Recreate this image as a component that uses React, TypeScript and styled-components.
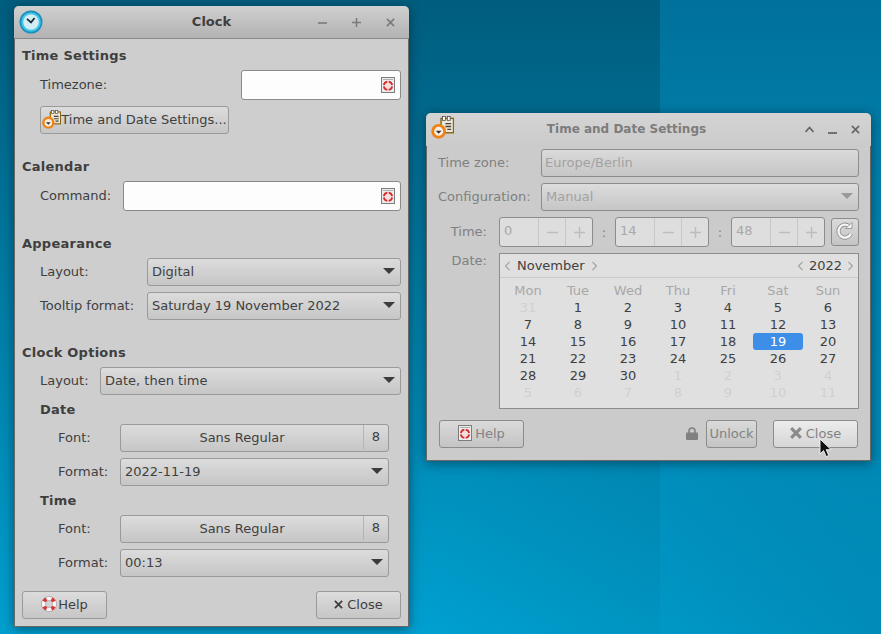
import React from 'react';
import styled, { createGlobalStyle } from 'styled-components';

const GlobalStyle = createGlobalStyle`
  html, body { margin: 0; padding: 0; height: 100%; overflow: hidden; }
  #root { height: 100%; }
  * { box-sizing: border-box; }
`;

const Desktop = styled.div`
  position: relative;
  width: 881px;
  height: 634px;
  overflow: hidden;
  font-family: "DejaVu Sans", sans-serif;
  font-size: 13px;
  color: #3f3f3f;
  background:
    radial-gradient(circle at 100% 100%, rgba(0, 30, 50, 0.18), rgba(0, 30, 50, 0) 450px),
    linear-gradient(180deg, #005d7e 0, #00a0d0 100%) left top / 660px 100% no-repeat,
    linear-gradient(180deg, #00719a 0, #00a4d6 100%) right top / 221px 100% no-repeat;
`;

const Window = styled.div<{ $x: number; $y: number; $w: number; $h: number; $bg?: string }>`
  position: absolute;
  left: ${(p) => p.$x}px;
  top: ${(p) => p.$y}px;
  width: ${(p) => p.$w}px;
  height: ${(p) => p.$h}px;
  background: ${(p) => p.$bg || '#cecece'};
  border-radius: 5px 5px 0 0;
  box-shadow:
    inset 0 0 0 1px rgba(70, 70, 70, 0.75),
    0 2px 12px rgba(0, 20, 35, 0.5);
  display: flex;
  flex-direction: column;
`;

const TitleBar = styled.div<{ $dim?: boolean }>`
  position: relative;
  height: 33px;
  flex: none;
  display: flex;
  align-items: center;
  justify-content: center;
  font-weight: 700;
  font-size: ${(p) => (p.$dim ? 12 : 13)}px;
  padding-bottom: 2px;
  padding-right: ${(p) => (p.$dim ? 44 : 0)}px;
  color: ${(p) => (p.$dim ? '#7c7c7c' : '#3f3f3f')};
  background: ${(p) =>
    p.$dim ? 'linear-gradient(180deg, #d4d4d4, #cbcbcb)' : 'linear-gradient(180deg, #d0d0d0, #b2b2b2)'};
  border-bottom: ${(p) => (p.$dim ? 'none' : '1px solid #8a8a8a')};
  border-radius: 5px 5px 0 0;
`;

const TitleIcon = styled.div<{ $left: number; $top: number }>`
  position: absolute;
  left: ${(p) => p.$left}px;
  top: ${(p) => p.$top}px;
  display: flex;
`;

const TitleButtons = styled.div<{ $dim?: boolean }>`
  position: absolute;
  right: ${(p) => (p.$dim ? 11 : 14)}px;
  top: 0;
  height: 100%;
  display: flex;
  align-items: center;
  gap: ${(p) => (p.$dim ? 14 : 25)}px;
  color: ${(p) => (p.$dim ? '#666' : '#7a7a7a')};
`;

const ClockBody = styled.div`
  flex: 1;
  display: flex;
  flex-direction: column;
  padding: 8px 8px 8px;
`;

const Heading = styled.div<{ $top?: number; $indent?: number }>`
  font-weight: 700;
  height: 16px;
  line-height: 16px;
  padding-top: 1px;
  letter-spacing: 0.25px;
  margin-top: ${(p) => p.$top || 0}px;
  margin-left: ${(p) => p.$indent || 0}px;
`;

const Row = styled.div<{ $indent?: number; $top?: number; $h?: number; $right?: number }>`
  display: flex;
  align-items: center;
  height: ${(p) => p.$h || 28}px;
  margin-top: ${(p) => p.$top ?? 6}px;
  margin-left: ${(p) => p.$indent ?? 18}px;
  margin-right: ${(p) => p.$right || 0}px;
`;

const Label = styled.div<{ $w?: number; $dim?: boolean; $right?: boolean }>`
  flex: none;
  width: ${(p) => (p.$w ? `${p.$w}px` : 'auto')};
  padding-bottom: 2px;
  text-align: ${(p) => (p.$right ? 'right' : 'left')};
  color: ${(p) => (p.$dim ? '#808080' : '#3f3f3f')};
`;

const Entry = styled.div<{ $w?: number }>`
  height: 30px;
  display: flex;
  align-items: center;
  justify-content: flex-end;
  padding-right: 5px;
  background: #fdfdfd;
  border: 1px solid #8a8a8a;
  border-radius: 3px;
  margin-left: auto;
  width: ${(p) => (p.$w ? `${p.$w}px` : '100%')};
`;

const Button = styled.div<{ $w?: number; $dim?: boolean; $hover?: boolean }>`
  flex: none;
  height: 28px;
  width: ${(p) => (p.$w ? `${p.$w}px` : 'auto')};
  display: flex;
  align-items: center;
  justify-content: center;
  padding-bottom: 2px;
  color: ${(p) => (p.$dim ? '#838383' : '#3f3f3f')};
  border: 1px solid ${(p) => (p.$dim ? '#8c8c8c' : '#9a9a9a')};
  border-radius: 3px;
  background: ${(p) =>
    p.$hover
      ? 'linear-gradient(180deg, #ececec, #d6d6d6)'
      : p.$dim
        ? 'linear-gradient(180deg, #dadada, #c4c4c4)'
        : 'linear-gradient(180deg, #dcdcdc, #c6c6c6)'};
`;

const Combo = styled.div<{ $dim?: boolean }>`
  flex: 1;
  height: 28px;
  display: flex;
  align-items: center;
  justify-content: space-between;
  padding: 0 5px 2px 4px;
  color: ${(p) => (p.$dim ? '#a2a2a2' : '#3f3f3f')};
  border: 1px solid ${(p) => (p.$dim ? '#8c8c8c' : '#9a9a9a')};
  border-radius: 3px;
  background: linear-gradient(180deg, #dcdcdc, #c6c6c6);
`;

const Arrow = styled.span<{ $dim?: boolean }>`
  width: 0;
  height: 0;
  border-left: 6px solid transparent;
  border-right: 6px solid transparent;
  border-top: 6px solid ${(p) => (p.$dim ? '#999' : '#3c3c3c')};
`;

const FontButton = styled(Button)`
  flex: 1;
  justify-content: stretch;
`;

const FontName = styled.div`
  flex: 1;
  text-align: center;
`;

const FontSize = styled.div`
  width: 25px;
  height: 24px;
  line-height: 24px;
  text-align: center;
  border-left: 1px solid #b4b4b4;
`;

const ButtonBar = styled.div`
  display: flex;
  justify-content: space-between;
  margin-top: auto;
`;

const DialogBody = styled.div`
  flex: 1;
  display: flex;
  flex-direction: column;
  padding: 3px 12px 12px;
`;

const DisabledEntry = styled.div`
  flex: 1;
  height: 28px;
  display: flex;
  align-items: center;
  padding: 0 0 2px 3px;
  color: #a2a2a2;
  border: 1px solid #8c8c8c;
  border-radius: 3px;
  background: linear-gradient(180deg, #dadada, #c6c6c6);
`;

const SpinRow = styled.div`
  display: flex;
  align-items: center;
  margin-left: 12px;
`;

const Spin = styled.div`
  width: 94px;
  height: 30px;
  display: flex;
  border: 1px solid #8c8c8c;
  border-radius: 3px;
  background: #dedede;
  color: #a8a8a8;
`;

const SpinValue = styled.div`
  flex: 1;
  line-height: 26px;
  padding-left: 4px;
`;

const SpinStep = styled.div`
  width: 27px;
  display: flex;
  align-items: center;
  justify-content: center;
  border-left: 1px solid #c8c8c8;
  color: #bcbcbc;
`;

const Colon = styled.div`
  width: 22px;
  text-align: center;
  color: #808080;
`;

const RefreshButton = styled(Button)`
  margin-left: 6px;
`;

const DateRow = styled.div`
  display: flex;
  margin-top: 6px;
`;

const Calendar = styled.div`
  width: 360px;
  height: 156px;
  margin-left: 12px;
  background: #e0e0e0;
  border: 1px solid #8c8c8c;
`;

const CalHeader = styled.div`
  height: 24px;
  display: flex;
  align-items: center;
  justify-content: space-between;
  padding: 0 4px;
  border-bottom: 1px solid #cacaca;
`;

const CalNav = styled.div<{ $gap: number }>`
  display: flex;
  align-items: center;
  gap: ${(p) => p.$gap}px;
`;

const Chevron = styled.span`
  color: #a2a2a2;
  display: inline-flex;
`;

const CalGrid = styled.div`
  display: grid;
  grid-template-columns: repeat(7, 50px);
  grid-auto-rows: 17px;
  padding: 4px 3px 0;
`;

const Cell = styled.div<{ $kind: 'head' | 'day' | 'other' | 'selected' }>`
  text-align: center;
  line-height: 17px;
  border-radius: 3px;
  color: ${(p) =>
    ({ head: '#a8a8a8', day: '#3f3f3f', other: '#d0d0d0', selected: '#ffffff' })[p.$kind]};
  background: ${(p) => (p.$kind === 'selected' ? '#3d8ee6' : 'none')};
`;

const DialogButtons = styled.div`
  display: flex;
  align-items: center;
  margin-top: 11px;
  padding: 0 1px;
`;

const LockWrap = styled.div`
  margin-left: auto;
  margin-right: 8px;
  padding-bottom: 2px;
  display: flex;
`;

const CloseButton = styled(Button)`
  margin-left: 16px;
`;

const IconGap = styled.span`
  display: inline-block;
  width: ${(p: { $w: number }) => p.$w}px;
`;

const Cursor = styled.svg`
  position: absolute;
  left: 819px;
  top: 438px;
  width: 15px;
  height: 20px;
`;

const HelpBoxIcon = () => (
  <svg width="14" height="16" viewBox="0 0 14 16">
    <rect x="0.5" y="0.5" width="13" height="15" fill="#ececec" stroke="#7c7c7c" />
    <rect x="2" y="2" width="10" height="1" fill="#b0b0b0" />
    <circle cx="7" cy="8.8" r="4.2" fill="#f4dede" stroke="#f4f4f4" strokeWidth="1.8" />
    <circle
      cx="7"
      cy="8.8"
      r="4.2"
      fill="none"
      stroke="#d42a2a"
      strokeWidth="1.8"
      pathLength={40}
      strokeDasharray="8 2"
      strokeDashoffset="-1"
    />
  </svg>
);

const LifebuoyIcon = () => (
  <svg width="16" height="16" viewBox="0 0 16 16">
    <circle cx="8" cy="8" r="5.6" fill="none" stroke="#f8f8f8" strokeWidth="3.8" />
    <circle
      cx="8"
      cy="8"
      r="5.6"
      fill="none"
      stroke="#dc3434"
      strokeWidth="3.8"
      pathLength={40}
      strokeDasharray="4 6"
      strokeDashoffset="-3"
    />
    <circle cx="8" cy="8" r="7.6" fill="none" stroke="#a88" strokeWidth="0.6" />
    <circle cx="8" cy="8" r="3.6" fill="none" stroke="#a88" strokeWidth="0.5" />
  </svg>
);

const SettingsIcon = ({ size }: { size: number }) => (
  <svg width={size} height={size} viewBox="0 0 24 24">
    <rect x="10.5" y="2.5" width="13" height="15" fill="#ece6d2" stroke="#8a6412" strokeWidth="1.5" />
    <rect x="12" y="0.5" width="3" height="4" fill="#fff" stroke="#444" strokeWidth="0.8" />
    <rect x="17" y="0.5" width="3" height="4" fill="#fff" stroke="#444" strokeWidth="0.8" />
    <path d="M15 8h6M15 11h6M17 14h4" stroke="#444" strokeWidth="1.4" />
    <circle cx="8" cy="16" r="6.2" fill="#f6f0e8" stroke="#f08314" strokeWidth="3" />
    <path d="M5 15.5h6L8 18.5z" fill="#333" />
  </svg>
);

const ClockIcon = () => (
  <svg width="24" height="24" viewBox="0 0 24 24">
    <circle cx="12" cy="12" r="11.5" fill="#1c8fbd" />
    <circle cx="12" cy="12" r="9.8" fill="#3fc4ea" />
    <circle cx="12" cy="12" r="7.8" fill="#d3edf6" />
    <path d="M8 8.8l4 3.6 3.6-4.4" fill="none" stroke="#1b2a33" strokeWidth="1.7" />
  </svg>
);

const CrossIcon = ({ c = '#3f3f3f', s = 10, w = 2 }: { c?: string; s?: number; w?: number }) => (
  <svg width={s} height={s} viewBox="0 0 10 10">
    <path d="M1 1l8 8M9 1l-8 8" stroke={c} strokeWidth={w} fill="none" />
  </svg>
);

const LockIcon = () => (
  <svg width="12" height="13" viewBox="0 0 12 13">
    <path d="M3 6V4a3 3 0 0 1 6 0v2" fill="none" stroke="#808080" strokeWidth="1.6" />
    <rect x="0" y="5.5" width="12" height="7.5" rx="1" fill="#808080" />
  </svg>
);

const RefreshIcon = () => (
  <svg width="18" height="18" viewBox="0 0 18 18">
    <path d="M15 11.5A6.5 6.5 0 1 1 13 4" fill="none" stroke="#8c8c8c" strokeWidth="4" />
    <path d="M15 11.5A6.5 6.5 0 1 1 13 4" fill="none" stroke="#f4f4f4" strokeWidth="2.4" />
    <path d="M9.5 6.5h6.5v-6z" fill="#f4f4f4" stroke="#8c8c8c" strokeWidth="0.8" />
  </svg>
);

const ChevronLeft = () => (
  <svg width="7" height="10" viewBox="0 0 7 10">
    <path d="M5.5 1L1.5 5l4 4" fill="none" stroke="currentColor" strokeWidth="1.1" />
  </svg>
);

const ChevronRight = () => (
  <svg width="7" height="10" viewBox="0 0 7 10">
    <path d="M1.5 1l4 4-4 4" fill="none" stroke="currentColor" strokeWidth="1.1" />
  </svg>
);

const StepMinus = () => (
  <svg width="11" height="11" viewBox="0 0 11 11">
    <path d="M0 5.5h11" stroke="currentColor" strokeWidth="1.4" />
  </svg>
);

const StepPlus = () => (
  <svg width="11" height="11" viewBox="0 0 11 11">
    <path d="M0 5.5h11M5.5 0v11" stroke="currentColor" strokeWidth="1.4" />
  </svg>
);

const weekdays = ['Mon', 'Tue', 'Wed', 'Thu', 'Fri', 'Sat', 'Sun'];
const days = [
  31, 1, 2, 3, 4, 5, 6, 7, 8, 9, 10, 11, 12, 13, 14, 15, 16, 17, 18, 19, 20, 21, 22, 23, 24, 25, 26,
  27, 28, 29, 30, 1, 2, 3, 4, 5, 6, 7, 8, 9, 10, 11,
];

const dayKind = (i: number) => {
  if (i === 0 || i > 30) return 'other';
  return i === 19 ? 'selected' : 'day';
};

const SpinBox = ({ value }: { value: string }) => (
  <Spin>
    <SpinValue>{value}</SpinValue>
    <SpinStep>
      <StepMinus />
    </SpinStep>
    <SpinStep>
      <StepPlus />
    </SpinStep>
  </Spin>
);

const OptionRows = ({ format }: { format: string }) => (
  <>
    <Row $indent={36} $top={7} $right={12}>
      <Label $w={62}>Font:</Label>
      <FontButton>
        <FontName>Sans Regular</FontName>
        <FontSize>8</FontSize>
      </FontButton>
    </Row>
    <Row $indent={36} $right={12}>
      <Label $w={62}>Format:</Label>
      <Combo>
        {format}
        <Arrow />
      </Combo>
    </Row>
  </>
);

export default function App() {
  return (
    <Desktop>
      <GlobalStyle />
      <Window $x={14} $y={6} $w={395} $h={621}>
        <TitleBar>
          <TitleIcon $left={5} $top={4}>
            <ClockIcon />
          </TitleIcon>
          Clock
          <TitleButtons>
            <svg width="9" height="9" viewBox="0 0 9 9">
              <path d="M0 5h9" stroke="currentColor" strokeWidth="1.6" />
            </svg>
            <svg width="9" height="9" viewBox="0 0 9 9">
              <path d="M0 4.5h9M4.5 0v9" stroke="currentColor" strokeWidth="1.5" />
            </svg>
            <CrossIcon c="#7a7a7a" s={9} w={1.7} />
          </TitleButtons>
        </TitleBar>
        <ClockBody>
          <Heading>Time Settings</Heading>
          <Row $h={30} $top={7}>
            <Label>Timezone:</Label>
            <Entry $w={160}>
              <HelpBoxIcon />
            </Entry>
          </Row>
          <Row $top={6}>
            <Button $w={189}>
              <SettingsIcon size={19} />
              Time and Date Settings...
            </Button>
          </Row>
          <Heading $top={24}>Calendar</Heading>
          <Row $h={30} $top={7}>
            <Label $w={83}>Command:</Label>
            <Entry>
              <HelpBoxIcon />
            </Entry>
          </Row>
          <Heading $top={24}>Appearance</Heading>
          <Row $top={7}>
            <Label $w={107}>Layout:</Label>
            <Combo>
              Digital
              <Arrow />
            </Combo>
          </Row>
          <Row>
            <Label $w={107}>Tooltip format:</Label>
            <Combo>
              Saturday 19 November 2022
              <Arrow />
            </Combo>
          </Row>
          <Heading $top={24}>Clock Options</Heading>
          <Row $top={7}>
            <Label $w={60}>Layout:</Label>
            <Combo>
              Date, then time
              <Arrow />
            </Combo>
          </Row>
          <Heading $top={6} $indent={18}>
            Date
          </Heading>
          <OptionRows format="2022-11-19" />
          <Heading $top={6} $indent={18}>
            Time
          </Heading>
          <OptionRows format="00:13" />
          <ButtonBar>
            <Button $w={85}>
              <LifebuoyIcon />
              <IconGap $w={1} />
              Help
            </Button>
            <Button $w={85}>
              <CrossIcon s={9} />
              <IconGap $w={4} />
              Close
            </Button>
          </ButtonBar>
        </ClockBody>
      </Window>

      <Window $x={426} $y={113} $w={445} $h={348} $bg="#cbcbcb">
        <TitleBar $dim>
          <TitleIcon $left={5} $top={3}>
            <SettingsIcon size={23} />
          </TitleIcon>
          Time and Date Settings
          <TitleButtons $dim>
            <svg width="9" height="9" viewBox="0 0 9 9">
              <path d="M0.5 7l4-4.5 4 4.5" fill="none" stroke="currentColor" strokeWidth="1.8" />
            </svg>
            <svg width="9" height="9" viewBox="0 0 9 9">
              <path d="M0 8h9" stroke="currentColor" strokeWidth="1.8" />
            </svg>
            <CrossIcon c="#666" s={9} w={1.8} />
          </TitleButtons>
        </TitleBar>
        <DialogBody>
          <Row $indent={0} $top={0}>
            <Label $w={103} $dim>
              Time zone:
            </Label>
            <DisabledEntry>Europe/Berlin</DisabledEntry>
          </Row>
          <Row $indent={0}>
            <Label $w={103} $dim>
              Configuration:
            </Label>
            <Combo $dim>
              Manual
              <Arrow $dim />
            </Combo>
          </Row>
          <Row $indent={0} $h={30}>
            <Label $w={49} $dim $right>
              Time:
            </Label>
            <SpinRow>
              <SpinBox value="0" />
              <Colon>:</Colon>
              <SpinBox value="14" />
              <Colon>:</Colon>
              <SpinBox value="48" />
              <RefreshButton $dim $w={28}>
                <RefreshIcon />
              </RefreshButton>
            </SpinRow>
          </Row>
          <DateRow>
            <Label $w={49} $dim $right>
              Date:
            </Label>
            <Calendar>
              <CalHeader>
                <CalNav $gap={6}>
                  <Chevron>
                    <ChevronLeft />
                  </Chevron>
                  November
                  <Chevron>
                    <ChevronRight />
                  </Chevron>
                </CalNav>
                <CalNav $gap={5}>
                  <Chevron>
                    <ChevronLeft />
                  </Chevron>
                  2022
                  <Chevron>
                    <ChevronRight />
                  </Chevron>
                </CalNav>
              </CalHeader>
              <CalGrid>
                {weekdays.map((d) => (
                  <Cell key={d} $kind="head">
                    {d}
                  </Cell>
                ))}
                {days.map((d, i) => (
                  <Cell key={i} $kind={dayKind(i)}>
                    {d}
                  </Cell>
                ))}
              </CalGrid>
            </Calendar>
          </DateRow>
          <DialogButtons>
            <Button $w={85} $dim>
              <HelpBoxIcon />
              <IconGap $w={3} />
              Help
            </Button>
            <LockWrap>
              <LockIcon />
            </LockWrap>
            <Button $w={51} $dim>
              Unlock
            </Button>
            <CloseButton $w={85} $dim $hover>
              <CrossIcon c="#8a8a8a" s={12} w={2.6} />
              <IconGap $w={4} />
              Close
            </CloseButton>
          </DialogButtons>
        </DialogBody>
      </Window>

      <Cursor viewBox="0 0 15 20">
        <path d="M1 1v15l3.6-3.4 2.6 6 2.6-1.1-2.6-5.8h5z" fill="#111" stroke="#eee" strokeWidth="1" />
      </Cursor>
    </Desktop>
  );
}
